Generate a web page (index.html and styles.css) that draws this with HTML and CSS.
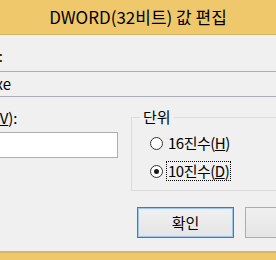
FILE: index.html
```html
<!DOCTYPE html>
<html>
<head>
    <meta charset="utf-8">
    <title>DWORD(32비트) 값 편집</title>
<link rel="stylesheet" href="styles.css">
</head>
<body>
<div class="window">
    <div class="titlebar">DWORD(32비트) 값 편집</div>
    <div class="client">
        <div class="label name-label">값 이름(<u>N</u>):</div>
        <div class="edit readonly">iexplore.exe</div>

        <div class="row">
            <div class="col">
                <div class="label">값 데이터(<u>V</u>):</div>
                <div class="edit"></div>
            </div>
            <fieldset class="group">
                <legend>단위</legend>
                <div class="radio"><span class="circle"></span><span class="text">16진수(<u>H</u>)</span></div>
                <div class="radio"><span class="circle checked"></span><span class="text focus">10진수(<u>D</u>)</span></div>
            </fieldset>
        </div>

        <div class="buttons">
            <div class="btn default">확인</div>
            <div class="btn">취소</div>
        </div>
    </div>
    <div class="frame-bottom"></div>
</div>
</body>
</html>
```

FILE: styles.css
```css
*
{
  margin: 0;
  padding: 0;
  box-sizing: border-box;
}

body
{
  font-family: "Noto Sans CJK KR", "Noto Sans", sans-serif;
  font-size: 15px;
  color: #000;
  background: #f0f0f0;
  overflow: hidden;
  width: 276px;
  height: 260px;
}

div.window
{
  width: 476px;
  margin-left: -100px;
}

div.titlebar
{
  height: 35px;
  background: #f0c86c;
  border-bottom: 1px solid #d6b265;
  text-align: center;
  font-size: 17px;
  line-height: 34px;
}

div.client
{
  height: 216px;
  background: #f0f0f0;
  padding: 11px 34px 0 30px;
}

div.label
{
  height: 20px;
  line-height: 20px;
  padding-left: 6px;
  white-space: nowrap;
}

div.label.name-label
{
  padding-left: 3px;
}

div.edit
{
  height: 26px;
  margin-top: 5px;
  border: 1px solid #abadb3;
  background: #fff;
  padding-left: 0;
  text-indent: -4px;
  line-height: 23px;
  white-space: nowrap;
  overflow: hidden;
}

div.edit.readonly
{
  background: #f0f0f0;
}

div.row
{
  display: flex;
  gap: 13px;
  margin-top: 10px;
}

div.col
{
  width: 188px;
  padding-top: 1px;
}

div.col div.edit
{
  margin-top: 4px;
}

fieldset.group
{
  flex: 1;
  border: 1px solid #dcdcdc;
  padding: 6px 0 9px 8px;
}

fieldset.group legend
{
  padding: 0 3px;
  line-height: 20px;
}

div.radio
{
  display: flex;
  align-items: center;
  height: 20px;
  margin-left: 10px;
}

div.radio + div.radio
{
  margin-top: 8px;
}

span.circle
{
  width: 13px;
  height: 13px;
  border: 1px solid #333;
  border-radius: 50%;
  background: #fff;
  position: relative;
  margin-right: 3px;
  flex-shrink: 0;
}

span.circle.checked::after
{
  content: "";
  position: absolute;
  left: 3px;
  top: 3px;
  width: 5px;
  height: 5px;
  border-radius: 50%;
  background: #1a1a1a;
}

span.text
{
  line-height: 18px;
  padding: 0 1px;
  letter-spacing: -0.5px;
  border: 1px dotted transparent;
}

span.text.focus
{
  border-color: #000;
}

div.buttons
{
  display: flex;
  justify-content: flex-end;
  gap: 11px;
  margin-top: 16px;
}

div.btn
{
  width: 97px;
  height: 31px;
  border: 1px solid #acacac;
  background: linear-gradient(#f0f0f0, #e5e5e5);
  text-align: center;
  line-height: 29px;
}

div.btn.default
{
  border-color: #2f7fd6;
  box-shadow: inset 0 0 0 1px #9cc6ee;
}

div.frame-bottom
{
  height: 9px;
  background: #f0c86c;
  border-top: 2px solid #d9b463;
}
```
